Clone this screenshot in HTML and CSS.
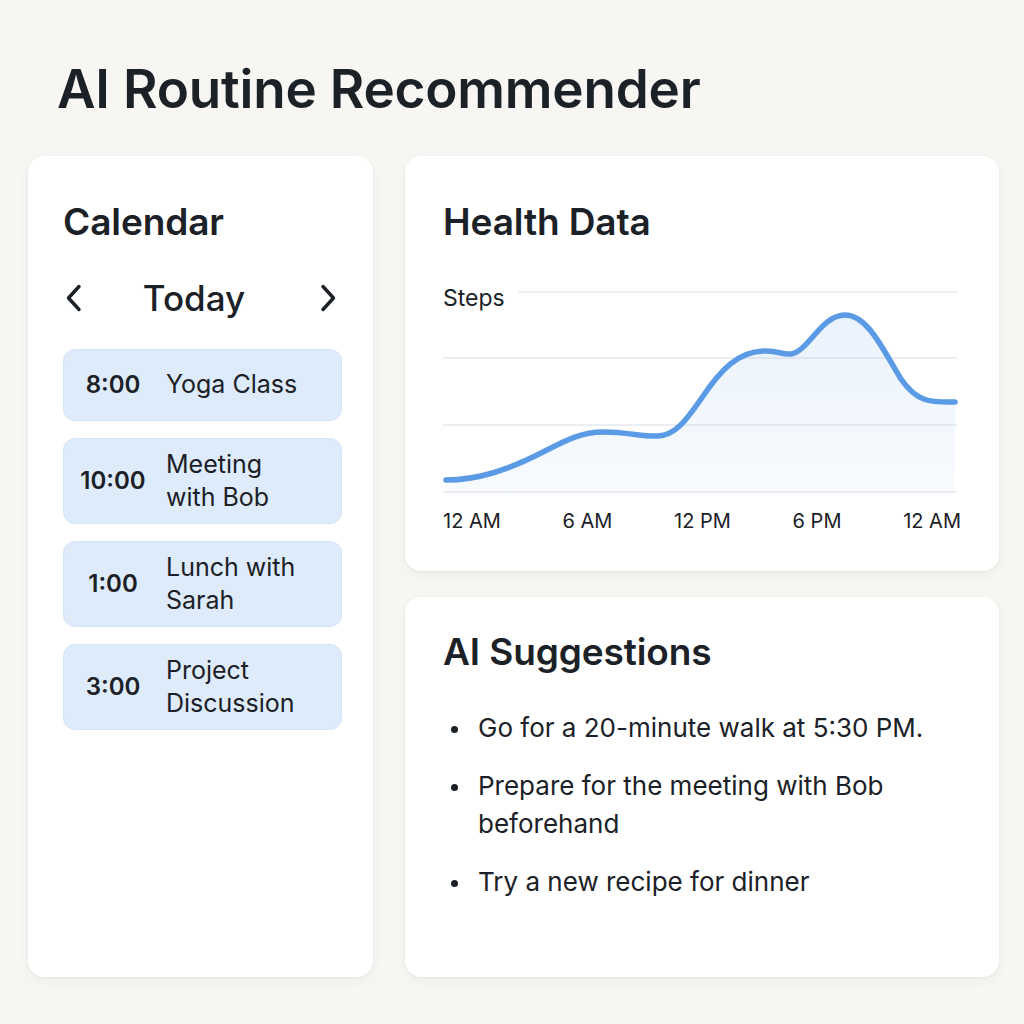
FILE: index.html
```html
<!DOCTYPE html>
<html lang="en">
<head>
<meta charset="utf-8">
<title>AI Routine Recommender</title>
<link rel="stylesheet" href="styles.css">
</head>
<body>
<div class="page">
  <h1 class="title">AI Routine Recommender</h1>
  <div class="grid">
    <section class="card calendar">
      <h2 class="card-title">Calendar</h2>
      <div class="day-nav">
        <svg class="chev" width="18" height="28" viewBox="0 0 18 28" aria-hidden="true"><path d="M14 2.5 L3.5 14 L14 25.5" fill="none" stroke="#1b2127" stroke-width="3.4" stroke-linecap="round" stroke-linejoin="round"/></svg>
        <span class="day-label">Today</span>
        <svg class="chev" width="18" height="28" viewBox="0 0 18 28" aria-hidden="true"><path d="M4 2.5 L14.5 14 L4 25.5" fill="none" stroke="#1b2127" stroke-width="3.4" stroke-linecap="round" stroke-linejoin="round"/></svg>
      </div>
      <ul class="events">
        <li class="event"><span class="time">8:00</span><span class="what">Yoga Class</span></li>
        <li class="event"><span class="time">10:00</span><span class="what">Meeting with Bob</span></li>
        <li class="event"><span class="time">1:00</span><span class="what">Lunch with Sarah</span></li>
        <li class="event"><span class="time">3:00</span><span class="what">Project Discussion</span></li>
      </ul>
    </section>

    <div class="right">
      <section class="card health">
        <h2 class="card-title">Health Data</h2>
        <svg class="chart" width="516" height="215" viewBox="0 0 516 215">
          <defs>
            <linearGradient id="fillGrad" x1="0" y1="0" x2="0" y2="1">
              <stop offset="0" stop-color="#5b9be6" stop-opacity="0.13"/>
              <stop offset="1" stop-color="#5b9be6" stop-opacity="0.04"/>
            </linearGradient>
          </defs>
          <text class="chart-label" x="0" y="22">Steps</text>
          <line x1="75" y1="8" x2="514" y2="8" class="gridline"/>
          <line x1="0" y1="74" x2="514" y2="74" class="gridline"/>
          <line x1="0" y1="141" x2="514" y2="141" class="gridline"/>
          <line x1="0" y1="208" x2="514" y2="208" class="gridline"/>
          <path class="area" d="M3,196 C35,196 65,186 100,168 C125,155 140,148 160,148 C185,148 200,153 215,152 C232,151 242,138 258,115 C278,85 295,68 320,67 C335,66 338,71 348,70 C365,68 378,31 402,31 C425,31 440,66 458,95 C475,120 490,118 512,118 L512,208 L3,208 Z"/>
          <path class="line" d="M3,196 C35,196 65,186 100,168 C125,155 140,148 160,148 C185,148 200,153 215,152 C232,151 242,138 258,115 C278,85 295,68 320,67 C335,66 338,71 348,70 C365,68 378,31 402,31 C425,31 440,66 458,95 C475,120 490,118 512,118"/>
        </svg>
        <div class="axis">
          <span>12 AM</span><span>6 AM</span><span>12 PM</span><span>6 PM</span><span>12 AM</span>
        </div>
      </section>

      <section class="card suggestions">
        <h2 class="card-title">AI Suggestions</h2>
        <ul class="tips">
          <li>Go for a 20-minute walk at 5:30 PM.</li>
          <li>Prepare for the meeting with Bob beforehand</li>
          <li>Try a new recipe for dinner</li>
        </ul>
      </section>
    </div>
  </div>
</div>
</body>
</html>
```

FILE: styles.css
```css
* { box-sizing: border-box; }

body {
  margin: 0;
  background: #f7f6f3;
  font-family: Inter, "Noto Sans", "Liberation Sans", sans-serif;
  color: #1b2127;
}

.page {
  padding: 58px 28px 46px;
}

.title {
  margin: 0 0 34px 29px;
  font-size: 53px;
  line-height: 1.2;
  font-weight: 600;
  letter-spacing: -0.2px;
  color: #1b2127;
}

.grid {
  display: grid;
  grid-template-columns: 345px 1fr;
  column-gap: 32px;
  height: 821px;
}

.card {
  background: #ffffff;
  border-radius: 16px;
  box-shadow: 0 1px 3px rgba(40, 40, 30, 0.06), 0 4px 14px rgba(40, 40, 30, 0.04);
}

.card-title {
  margin: 0;
  font-size: 37px;
  line-height: 1.2;
  font-weight: 600;
  letter-spacing: -0.1px;
}

/* Calendar */
.calendar {
  padding: 44px 31px 35px 35px;
}

.day-nav {
  display: flex;
  align-items: center;
  justify-content: space-between;
  margin-top: 33px;
  padding: 0 5px 0 2px;
}

.chev { display: block; }

.day-label {
  font-size: 35px;
  line-height: 1.2;
  font-weight: 500;
  margin-right: 14px;
}

.events {
  list-style: none;
  margin: 30px 0 0;
  padding: 0;
  display: flex;
  flex-direction: column;
  gap: 17px;
}

.event {
  display: flex;
  align-items: center;
  min-height: 72px;
  padding: 9px 16px;
  background: #deebfb;
  border: 1px solid #d4e4f7;
  border-radius: 12px;
}

.time {
  width: 70px;
  flex: none;
  text-align: center;
  font-size: 24px;
  font-weight: 600;
  margin-left: -2px;
}

.what {
  margin-left: 18px;
  max-width: 148px;
  font-size: 25px;
  line-height: 33px;
  font-weight: 400;
}

/* Right column */
.right {
  display: grid;
  grid-template-rows: 415px 1fr;
  row-gap: 26px;
}

.health {
  padding: 44px 38px 30px;
}

.chart {
  display: block;
  margin-top: 40px;
  overflow: visible;
}

.chart-label {
  font-family: Inter, "Noto Sans", sans-serif;
  font-size: 23px;
  fill: #1b2127;
}

.gridline {
  stroke: #e6e9ec;
  stroke-width: 1.5;
}

.area { fill: url(#fillGrad); }

.line {
  fill: none;
  stroke: #5b9be6;
  stroke-width: 5.5;
  stroke-linecap: round;
  stroke-linejoin: round;
}

.axis {
  display: flex;
  justify-content: space-between;
  margin-top: 10px;
  width: 518px;
  font-size: 20px;
  line-height: 24px;
  color: #1b2127;
}

.suggestions {
  padding: 33px 38px 30px;
}

.tips {
  list-style: none;
  margin: 35px 0 0;
  padding: 0 0 0 35px;
  display: flex;
  flex-direction: column;
  gap: 20px;
}

.tips li {
  position: relative;
  font-size: 26px;
  line-height: 38px;
}

.tips li::before {
  content: "";
  position: absolute;
  left: -27px;
  top: 17px;
  width: 7px;
  height: 7px;
  border-radius: 50%;
  background: #1b2127;
}
```
